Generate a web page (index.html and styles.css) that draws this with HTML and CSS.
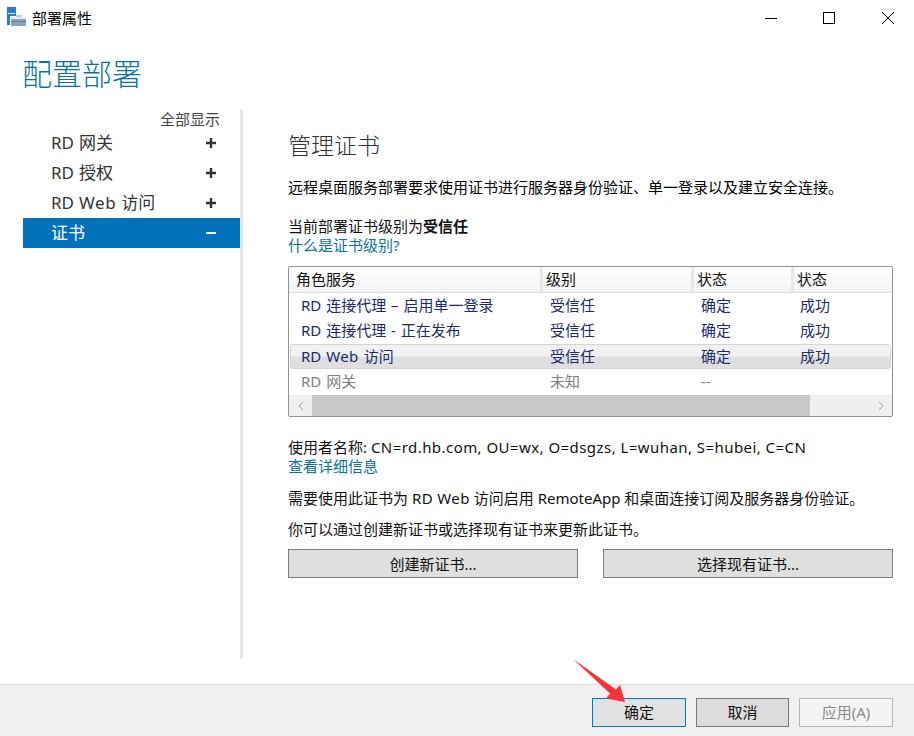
FILE: index.html
```html
<!DOCTYPE html>
<html lang="zh">
<head>
<meta charset="utf-8">
<title>部署属性</title>
<link rel="stylesheet" href="styles.css">
</head>
<body>
<div class="window">
  <header class="titlebar">
    <div class="title-left">
      <svg class="app-icon" width="20" height="20" viewBox="0 0 20 20">
        <rect x="0" y="0" width="9" height="18" fill="#2a7fc9"/>
        <rect x="1" y="6" width="7" height="1" fill="#d6e8f6"/>
        <path d="M3 9h16v10H3z" fill="#fff"/>
        <path d="M4 10h15v9H4z" fill="#8ba3b5"/>
        <path d="M4 10h15v2H4z" fill="#e6edf2"/>
        <path d="M4 14h15v1H4z" fill="#5f7f96"/>
        <path d="M9 8h6v2H9z" fill="#c3ced6"/>
      </svg>
      <span class="title-text">部署属性</span>
    </div>
    <div class="win-controls">
      <svg class="win-min" width="12" height="12" viewBox="0 0 12 12"><path d="M0 6.5h12" stroke="#000" stroke-width="1"/></svg>
      <svg width="12" height="12" viewBox="0 0 12 12"><rect x="0.5" y="0.5" width="11" height="11" fill="none" stroke="#000"/></svg>
      <svg width="12" height="12" viewBox="0 0 12 12"><path d="M0 0l12 12M12 0L0 12" stroke="#000" stroke-width="1"/></svg>
    </div>
  </header>

  <h1 class="page-title">配置部署</h1>

  <div class="content">
    <nav class="sidebar">
      <div class="show-all">全部显示</div>
      <div class="nav-item"><span>RD 网关</span><svg class="sign" width="10" height="10" viewBox="0 0 10 10"><path d="M0 5h10M5 0v10" stroke="#333" stroke-width="2.400"/></svg></div>
      <div class="nav-item"><span>RD 授权</span><svg class="sign" width="10" height="10" viewBox="0 0 10 10"><path d="M0 5h10M5 0v10" stroke="#333" stroke-width="2.400"/></svg></div>
      <div class="nav-item"><span>RD <span class="latin">Web</span> 访问</span><svg class="sign" width="10" height="10" viewBox="0 0 10 10"><path d="M0 5h10M5 0v10" stroke="#333" stroke-width="2.400"/></svg></div>
      <div class="nav-item active"><span>证书</span><svg class="sign" width="10" height="10" viewBox="0 0 10 10"><path d="M0 5h10" stroke="#fff" stroke-width="2"/></svg></div>
    </nav>

    <main class="panel">
      <h2 class="panel-title">管理证书</h2>
      <p class="intro">远程桌面服务部署要求使用证书进行服务器身份验证、单一登录以及建立安全连接。</p>
      <p class="level">当前部署证书级别为<b>受信任</b></p>
      <a class="link level-link">什么是证书级别?</a>

      <div class="table">
        <div class="row head">
          <div class="cell">角色服务</div>
          <div class="cell">级别</div>
          <div class="cell">状态</div>
          <div class="cell">状态</div>
        </div>
        <div class="row">
          <div class="cell">RD 连接代理 – 启用单一登录</div>
          <div class="cell">受信任</div>
          <div class="cell">确定</div>
          <div class="cell">成功</div>
        </div>
        <div class="row">
          <div class="cell">RD 连接代理 - 正在发布</div>
          <div class="cell">受信任</div>
          <div class="cell">确定</div>
          <div class="cell">成功</div>
        </div>
        <div class="row selected">
          <div class="cell">RD <span class="latin">Web</span> 访问</div>
          <div class="cell">受信任</div>
          <div class="cell">确定</div>
          <div class="cell">成功</div>
        </div>
        <div class="row muted">
          <div class="cell">RD 网关</div>
          <div class="cell">未知</div>
          <div class="cell">--</div>
          <div class="cell"></div>
        </div>
        <div class="scrollbar">
          <div class="sb-btn"><svg width="6" height="10" viewBox="0 0 6 10"><path d="M5 1L1 5l4 4" fill="none" stroke="#a0a0a0"/></svg></div>
          <div class="sb-thumb"></div>
          <div class="sb-track"></div>
          <div class="sb-btn"><svg width="6" height="10" viewBox="0 0 6 10"><path d="M1 1l4 4-4 4" fill="none" stroke="#a0a0a0"/></svg></div>
        </div>
      </div>

      <p class="subject">使用者名称: <span class="dn">CN=rd.hb.com, OU=wx, O=dsgzs, L=wuhan, S=hubei, C=CN</span></p>
      <a class="link details">查看详细信息</a>
      <p class="need">需要使用此证书为 <span class="latin">RD Web</span> 访问启用 RemoteApp 和桌面连接订阅及服务器身份验证。</p>
      <p class="renew">你可以通过创建新证书或选择现有证书来更新此证书。</p>
      <div class="cert-actions">
        <button class="btn">创建新证书...</button>
        <button class="btn">选择现有证书...</button>
      </div>
    </main>
  </div>

  <footer class="footer">
    <button class="btn foot-btn focus">确定</button>
    <button class="btn foot-btn cancel">取消</button>
    <button class="btn foot-btn disabled">应用(A)</button>
  </footer>

  <svg class="arrow" width="60" height="50" viewBox="0 0 60 50">
    <path d="M2 0L45 30.500L49 26L54 43L35 39.500L39 34.500Z" fill="#f5333a"/>
  </svg>
</div>
</body>
</html>
```

FILE: styles.css
```css
* { box-sizing: border-box; }
html, body { margin: 0; padding: 0; background: #fff; }
body {
  font-family: "Noto Sans", "Noto Sans CJK SC", sans-serif;
  font-size: 15px;
  color: #000;
}
.window {
  position: relative;
  width: 914px;
  height: 736px;
  display: flex;
  flex-direction: column;
  overflow: hidden;
}
.titlebar {
  height: 36px;
  display: flex;
  justify-content: space-between;
  align-items: center;
}
.title-left { display: flex; align-items: center; padding-left: 7px; gap: 5px; }
.app-icon { margin-top: -2px; }
.title-text { font-size: 15px; line-height: 36px; }
.win-controls { display: flex; gap: 47px; padding-right: 20px; align-items: center; margin-left: auto; }
.win-min { margin-right: -1px; }
.page-title {
  margin: 0;
  height: 74px;
  padding-left: 22px;
  padding-top: 18px;
  font-size: 30px;
  line-height: 40px;
  font-weight: 300;
  color: #0a7498;
}
.content { flex: 1; display: flex; height: 574px; }
.sidebar {
  width: 220px;
  margin-left: 23px;
  height: 549px;
  border-right: 3px solid #e6e6e6;
}
.show-all {
  height: 18px;
  line-height: 18px;
  text-align: right;
  padding-right: 20px;
  color: #444;
  font-size: 15px;
}
.nav-item {
  height: 30px;
  display: flex;
  justify-content: space-between;
  align-items: center;
  padding: 0 24px 0 28px;
  font-size: 17px;
  color: #333;
  word-spacing: 0.500px;
}
.nav-item > span { padding-bottom: 4px; }
.sign { flex: none; }
.latin { letter-spacing: 0.400px; }
.nav-item .latin { letter-spacing: 0.600px; }
.dn { letter-spacing: 0.440px; }
.nav-item.active { background: #0072bc; color: #fff; }
.panel { width: 605px; margin-left: 45px; }
.panel-title {
  margin: 0;
  font-size: 23px;
  line-height: 32px;
  font-weight: 300;
  color: #333;
  padding-top: 19px;
  height: 51px;
}
p { margin: 0; }
.intro { margin-top: 16px; line-height: 20px; }
.level { margin-top: 20px; line-height: 18px; color: #111; }
.link { display: block; color: #0a7498; line-height: 18px; }
.level-link { margin-top: 1px; }
.table {
  margin-top: 12px;
  height: 151px;
  border: 1px solid #8e9398;
  border-radius: 2px;
  display: flex;
  flex-direction: column;
  overflow: hidden;
}
.row {
  display: grid;
  grid-template-columns: 254px 151px 100px 1fr;
  height: 25.300px;
  flex: none;
  align-items: center;
  color: #1a2a6c;
  margin-left: 1px;
  margin-right: 1px;
  border: 1px solid transparent;
  border-left: 0;
  border-right: 0;
}
.row .cell { padding-left: 11px; padding-bottom: 2px; white-space: nowrap; line-height: 20px; }
.row .cell:first-child { word-spacing: 1px; }
.row .cell:nth-child(2) { padding-left: 6px; }
.row .cell:nth-child(3) { padding-left: 6px; }
.row .cell:nth-child(4) { padding-left: 5px; }
.row.head {
  height: 26px;
  margin: 0;
  color: #111;
  background: linear-gradient(#fff, #f3f3f3);
  border: 0;
  border-bottom: 1px solid #dcdcdc;
  padding-left: 0;
}
.row.head .cell { padding: 0 0 0 7px; height: 25px; line-height: 25px; border-right: 3px solid #e8e8e8; }
.row.head .cell:nth-child(2) { padding-left: 3px; }
.row.head .cell:nth-child(3) { padding-left: 3px; }
.row.head .cell:nth-child(4) { padding-left: 3px; border-right: 0; }
.row.selected {
  background: linear-gradient(#f1f1f1 0, #f1f1f1 48%, #dfdfdf 52%, #dfdfdf 100%);
  border: 1px solid #d4d4d4;
  border-radius: 3px;
}
.row.selected .cell { padding-bottom: 0; }
.row.selected .cell:nth-child(1) { padding-left: 10px; }
.row.selected .cell:nth-child(2) { padding-left: 5px; }
.row.selected .cell:nth-child(3) { padding-left: 5px; }
.row.selected .cell:nth-child(4) { padding-left: 4px; }
.row.muted { color: #808080; }
.scrollbar { display: flex; height: 21px; margin-top: auto; background: #ececec; }
.sb-btn { width: 23px; display: flex; align-items: center; justify-content: center; background: #efefef; }
.sb-thumb { width: 498px; background: #c8c8c8; }
.sb-track { flex: 1; background: #efefef; }
.subject { margin-top: 20px; line-height: 20px; color: #111; }
.details { line-height: 18px; }
.need { margin-top: 13px; line-height: 20px; color: #111; }
.renew { margin-top: 11px; line-height: 20px; color: #111; }
.cert-actions { display: flex; justify-content: space-between; margin-top: 10px; }
.btn {
  font: inherit;
  color: #111;
  background: #e1e1e1;
  border: 1px solid #adadad;
  padding: 0;
  height: 29px;
  width: 290px;
}
.cert-actions .btn { border-color: #7a7a7a; background: #dfdfdf; }
.footer {
  height: 52px;
  background: #f0f0f0;
  border-top: 1px solid #dcdcdc;
  display: flex;
  justify-content: flex-end;
  gap: 10px;
  padding: 13px 21px 0 0;
}
.foot-btn { width: 94px; height: 29px; padding-bottom: 2px; }
.foot-btn.focus { border-color: #0078d7; background: #e1e1e1; }
.foot-btn.cancel { width: 93px; border-color: #7a7a7a; background: #dcdcdc; }
.foot-btn.disabled { color: #8a8a8a; background: #f4f4f4; border-color: #b5b5b5; }
.arrow { position: absolute; left: 571px; top: 659px; }
```
